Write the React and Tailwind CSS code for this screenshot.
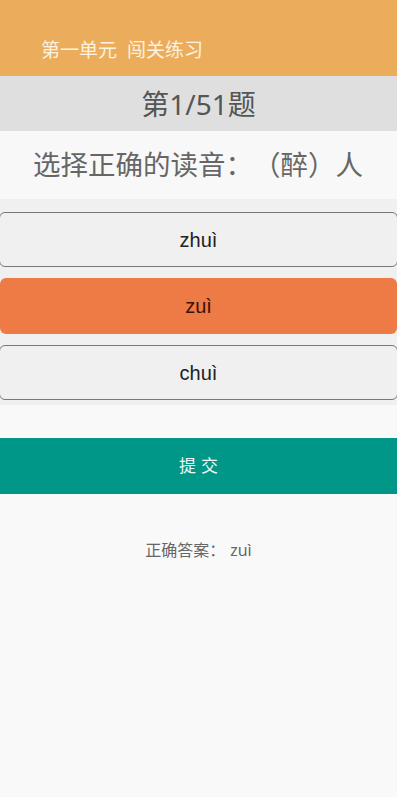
export default function App() {
  const font = { fontFamily: '"Noto Sans", "Noto Sans CJK SC", sans-serif' };
  return (
    <div className="w-[397px] h-[797px] bg-[#f9f9f9] flex flex-col [text-spacing-trim:space-all]" style={font}>
      <div className="h-[76px] bg-[#ebad5c] flex items-end pb-[16px] pl-[41px]">
        <span className="text-[19px] text-[#fdf2e0] leading-none whitespace-pre">第一单元  闯关练习</span>
      </div>
      <div className="h-[55px] bg-[#dfdfdf] flex items-center justify-center">
        <span className="text-[28px] text-[#555555] leading-none">第1/51题</span>
      </div>
      <div className="h-[68px] bg-[#f8f8f8] flex items-center pl-[33px]">
        <span className="text-[27.5px] text-[#666666] leading-none">选择正确的读音：（醉）人</span>
      </div>
      <div className="bg-[#f0f0f0] pt-[13px] pb-[5px] flex flex-col gap-[11px]">
        <div className="h-[55px] mx-[-1px] rounded-[6px] border-[1.5px] border-[#777777] flex items-center justify-center">
          <span className="text-[20px] text-[#222222]" style={{ fontFamily: '"Liberation Sans", sans-serif' }}>zhuì</span>
        </div>
        <div className="h-[56px] rounded-[6px] bg-[#ee7a45] flex items-center justify-center">
          <span className="text-[20px] text-[#3a1205]" style={{ fontFamily: '"Liberation Sans", sans-serif' }}>zuì</span>
        </div>
        <div className="h-[55px] mx-[-1px] rounded-[6px] border-[1.5px] border-[#777777] flex items-center justify-center">
          <span className="text-[20px] text-[#222222]" style={{ fontFamily: '"Liberation Sans", sans-serif' }}>chuì</span>
        </div>
      </div>
      <div className="h-[33px]" />
      <div className="h-[56px] bg-[#009688] flex items-center justify-center">
        <span className="text-[17px] text-[#eef8f6] tracking-[5px] pl-[5px]">提交</span>
      </div>
      <div className="pt-[44px] flex justify-center">
        <span className="text-[16px] text-[#666666]">
          正确答案<span className="inline-block w-[1.3em]">：</span>zuì
        </span>
      </div>
    </div>
  );
}
